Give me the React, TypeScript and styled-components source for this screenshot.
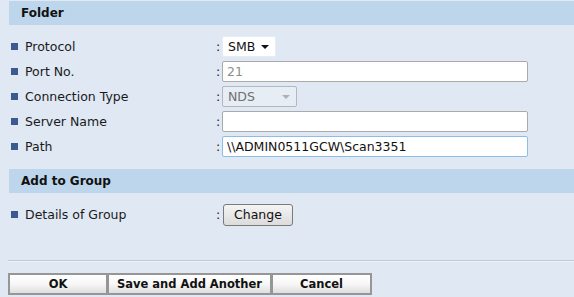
import { createGlobalStyle, styled } from 'styled-components';

const GlobalStyle = createGlobalStyle`
  html, body {
    margin: 0;
    padding: 0;
    background: #dfe8f3;
  }
  body {
    font-family: 'DejaVu Sans', Verdana, sans-serif;
    font-size: 12px;
    color: #1a1a1a;
  }
`;

type FieldRow = {
  label: string;
  control: React.ReactNode;
};

const Arrow = ({ color }: { color: string }) => (
  <svg width="8" height="4" viewBox="0 0 8 4">
    <path d="M0 0 L8 0 L4 4 Z" fill={color} />
  </svg>
);

const App = () => {
  const folderRows: FieldRow[] = [
    {
      label: 'Protocol',
      control: (
        <FakeSelect $width={54}>
          <span>SMB</span>
          <Arrow color="#111" />
        </FakeSelect>
      ),
    },
    { label: 'Port No.', control: <TextBox value="21" readOnly disabled /> },
    {
      label: 'Connection Type',
      control: (
        <FakeSelect $width={75} $disabled>
          <span>NDS</span>
          <Arrow color="#b0b0b0" />
        </FakeSelect>
      ),
    },
    { label: 'Server Name', control: <TextBox value="" readOnly /> },
    { label: 'Path', control: <TextBox value={'\\\\ADMIN0511GCW\\Scan3351'} readOnly $focused /> },
  ];

  return (
    <>
      <GlobalStyle />
      <Page>
        <SectionHeader>Folder</SectionHeader>
        <Rows>
          {folderRows.map((row) => (
            <Row key={row.label}>
              <Bullet />
              <Label>{row.label}</Label>
              <Colon>:</Colon>
              {row.control}
            </Row>
          ))}
        </Rows>

        <SectionHeader>Add to Group</SectionHeader>
        <Rows>
          <Row>
            <Bullet />
            <Label>Details of Group</Label>
            <Colon>:</Colon>
            <ChangeButton>Change</ChangeButton>
          </Row>
        </Rows>

        <Separator />

        <ActionBar>
          <ActionButton $width={100}>OK</ActionButton>
          <ActionButton $width={165}>Save and Add Another</ActionButton>
          <ActionButton $width={101}>Cancel</ActionButton>
        </ActionBar>
      </Page>
    </>
  );
};

export default App;

const Page = styled.div`
  width: 574px;
  height: 297px;
  padding-top: 1px;
  box-sizing: border-box;
  overflow: hidden;
`;

const SectionHeader = styled.div`
  margin-left: 9px;
  height: 24px;
  line-height: 24px;
  padding-left: 12px;
  background: #bdd6ec;
  font-weight: bold;
  color: #111;
`;

const Rows = styled.div`
  display: flex;
  flex-direction: column;
  padding: 9px 0 10px;
`;

const Row = styled.div`
  display: flex;
  align-items: center;
  height: 25px;
  font-size: 12.5px;
`;

const Bullet = styled.span`
  width: 7px;
  height: 7px;
  margin-left: 11px;
  margin-right: 7px;
  background: #3b5a8f;
  flex-shrink: 0;
`;

const Label = styled.span`
  width: 191px;
  white-space: nowrap;
`;

const Colon = styled.span`
  width: 6px;
`;

const FakeSelect = styled.div<{ $width: number; $disabled?: boolean }>`
  display: flex;
  align-items: center;
  justify-content: space-between;
  box-sizing: border-box;
  width: ${(p) => p.$width}px;
  height: 21px;
  padding: 0 6px 0 5px;
  border: 1px solid ${(p) => (p.$disabled ? '#b4b8bd' : '#e8edf2')};
  border-radius: 2px;
  background: ${(p) => (p.$disabled ? '#e6edf5' : '#ffffff')};
  color: ${(p) => (p.$disabled ? '#707070' : '#111')};
`;

const TextBox = styled.input<{ $focused?: boolean }>`
  box-sizing: border-box;
  width: 306px;
  height: 21px;
  padding: 0 4px;
  border: 1px solid ${(p) => (p.$focused ? '#8cbde4' : '#aaaaaa')};
  border-radius: 2px;
  background: #ffffff;
  font-family: 'DejaVu Sans', Verdana, sans-serif;
  font-size: 12.5px;
  color: #111;
  outline: none;

  &:disabled {
    color: #8d8d8d;
    background: #ffffff;
  }
`;

const ChangeButton = styled.button`
  box-sizing: border-box;
  width: 70px;
  height: 22px;
  margin-left: 1px;
  padding: 0;
  border: 1px solid #7a7a7a;
  border-radius: 3px;
  background: linear-gradient(#f4f4f4, #dcdcdc);
  font-family: 'DejaVu Sans', Verdana, sans-serif;
  font-size: 12.5px;
  color: #111;
`;

const Separator = styled.div`
  margin: 23px 0 0 8px;
  height: 1px;
  background: #c2cad3;
  border-bottom: 1px solid #eef3f8;
`;

const ActionBar = styled.div`
  display: flex;
  margin: 11px 0 0 8px;
`;

const ActionButton = styled.button<{ $width: number }>`
  box-sizing: border-box;
  width: ${(p) => p.$width}px;
  height: 22px;
  padding: 0;
  margin-right: -1px;
  border: 2px solid #969696;
  background: linear-gradient(#ffffff 0%, #f7f7f7 50%, #dedede 100%);
  font-family: 'DejaVu Sans', Verdana, sans-serif;
  font-size: 11.5px;
  font-weight: bold;
  color: #111;
`;
